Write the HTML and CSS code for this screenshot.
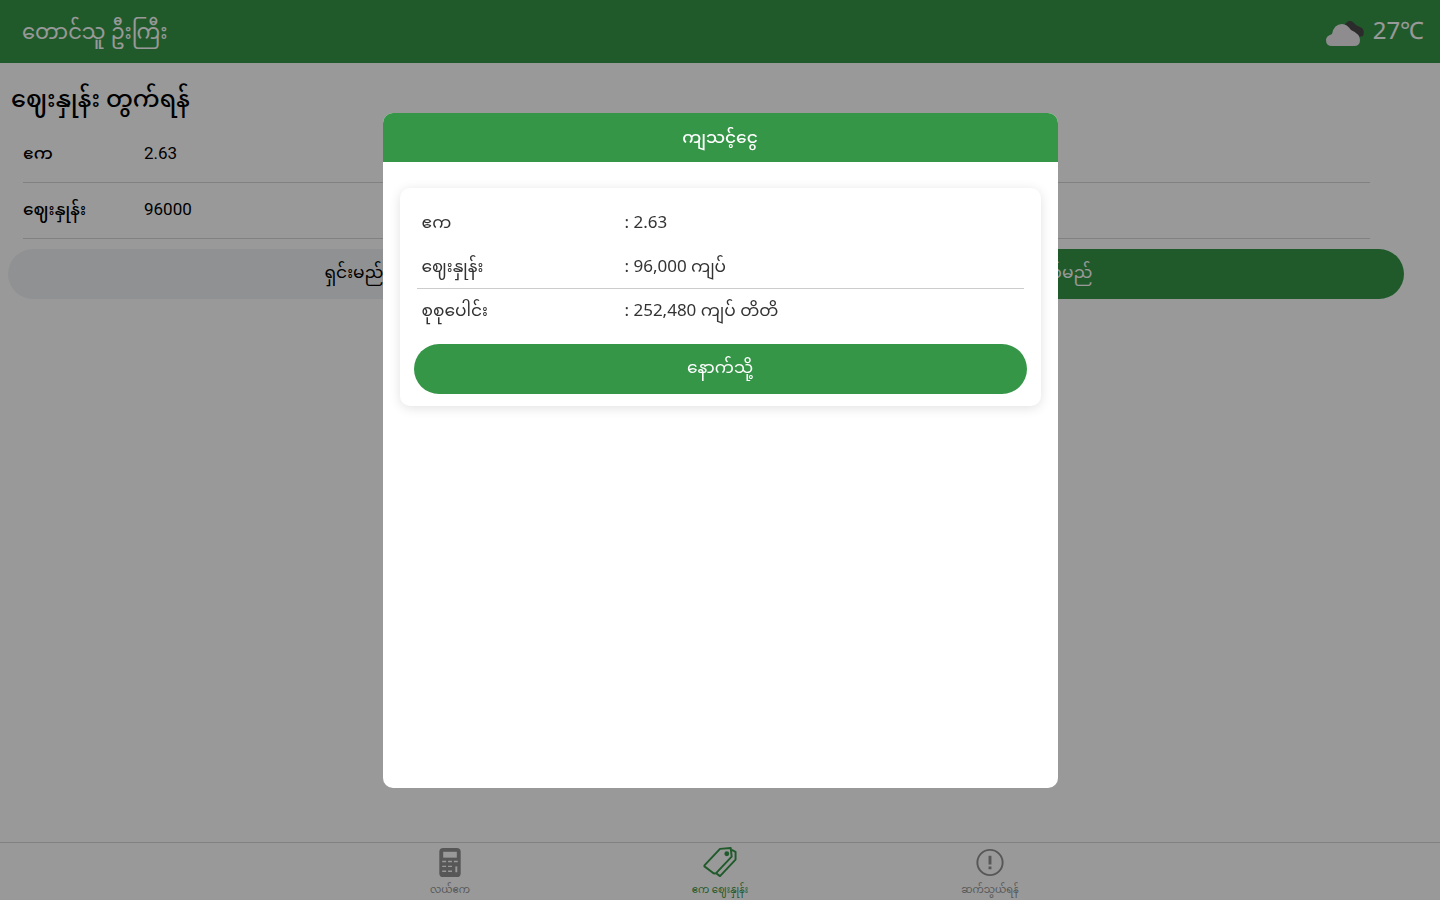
FILE: index.html
```html
<!DOCTYPE html>
<html lang="my">
<head>
    <meta charset="UTF-8">
    <meta name="viewport" content="width=device-width, initial-scale=1.0">
    <title>တောင်သူ ဦးကြီး</title>
    <link rel="stylesheet" href="styles.css">
</head>
<body>
<div class="page">
    <header class="header">
        <div class="app-name">တောင်သူ ဦးကြီး</div>
        <div class="weather">
            <svg class="cloud" viewBox="0 0 40 28" aria-hidden="true">
                <path d="M18 8 L22 3 Q25 1 28 3 L31 6 L37 9 Q40 12 38 17 L34 18 L28 16 Z" fill="#484848"/>
                <path d="M7 27 Q1 27 1 21 Q1 17 7 15 Q9 5 17 5 Q22 5 26 11 Q35 15 35 21 Q35 27 29 27 Z" fill="#eeeaf0"/>
            </svg>
            <span>27℃</span>
        </div>
    </header>

    <main class="content">
        <h1>ဈေးနှုန်း တွက်ရန်</h1>
        <form>
            <div class="field">
                <label for="acre">ဧက</label>
                <input type="text" id="acre" value="2.63">
            </div>
            <div class="field">
                <label for="price">ဈေးနှုန်း</label>
                <input type="text" id="price" value="96000">
            </div>
            <div class="actions">
                <button type="reset" class="btn btn-light">ရှင်းမည်</button>
                <button type="button" class="btn">တွက်မည်</button>
            </div>
        </form>
    </main>

    <nav class="tabs">
        <a href="#area" class="tab">
            <svg viewBox="0 0 36 36" aria-hidden="true">
                <rect x="7" y="3" width="22" height="30" rx="4" fill="currentColor"/>
                <path d="M11 7h14v6H11z" fill="#fff"/>
                <path d="M10 17h16M10 22h11M10 27h11" stroke="#fff" stroke-width="1.5" stroke-dasharray="4 2"/>
                <path d="M24.5 22v6" stroke="#fff" stroke-width="2"/>
            </svg>
            <span>လယ်ဧက</span>
        </a>
        <a href="#price" class="tab active">
            <svg viewBox="0 0 36 36" fill="none" stroke="currentColor" stroke-width="2" stroke-linejoin="round" aria-hidden="true">
                <path d="M2 21 L18 4 L29 3 L30 12 L14 29 Q12 30 10 28 L2 22 Z"/>
                <path d="M30 5 L34 7 L34 15 L18 32 L14 29"/>
                <circle cx="25" cy="9" r="1.5" fill="currentColor"/>
            </svg>
            <span>ဧက ဈေးနှုန်း</span>
        </a>
        <a href="#contact" class="tab">
            <svg viewBox="0 0 36 36" fill="none" stroke="currentColor" stroke-width="2" aria-hidden="true">
                <circle cx="18" cy="18" r="13"/>
                <path d="M18 11v9M18 22v3" stroke-width="3"/>
            </svg>
            <span>ဆက်သွယ်ရန်</span>
        </a>
    </nav>
</div>

<div class="backdrop">
    <section class="modal" role="dialog" aria-labelledby="modal-title">
        <h2 id="modal-title">ကျသင့်ငွေ</h2>
        <div class="card">
            <dl class="row">
                <dt>ဧက</dt>
                <dd>: 2.63</dd>
            </dl>
            <dl class="row">
                <dt>ဈေးနှုန်း</dt>
                <dd>: 96,000 ကျပ်</dd>
            </dl>
            <dl class="row total">
                <dt>စုစုပေါင်း</dt>
                <dd>: 252,480 ကျပ် တိတိ</dd>
            </dl>
            <button type="button" class="btn">နောက်သို့</button>
        </div>
    </section>
</div>
</body>
</html>
```
FILE: styles.css
```css
:root {
    --green: #369648;
    --border: #d8d8d8;
}

* {
    margin: 0;
    padding: 0;
    box-sizing: border-box;
}

body {
    font-family: Roboto, 'Noto Sans', 'Noto Sans Myanmar', sans-serif;
    font-size: 17px;
    color: #000;
    background: #fff;
}

.page {
    min-height: 100vh;
    display: flex;
    flex-direction: column;
}

.header {
    height: 63px;
    padding: 0 16px 0 22px;
    display: flex;
    align-items: center;
    justify-content: space-between;
    color: #fff;
    background: var(--green);
}

.app-name {
    padding-top: 4px;
    font-size: 21px;
}

.weather {
    padding-bottom: 4px;
    display: flex;
    align-items: center;
    gap: 8px;
    font-family: 'Noto Sans', sans-serif;
    font-size: 24px;
    line-height: 32px;
}

.cloud {
    width: 40px;
    height: 28px;
    margin-top: 6px;
}

.content {
    flex: 1;
    padding: 8px 36px 0 8px;
}

h1 {
    height: 56px;
    line-height: 56px;
    padding-left: 3px;
    font-size: 24px;
    font-weight: 500;
}

.field {
    height: 56px;
    margin: 0 34px 0 15px;
    display: flex;
    align-items: center;
    border-bottom: 1px solid var(--border);
}

.field label {
    width: 121px;
    font-weight: 500;
}

.field input {
    flex: 1;
    padding-bottom: 4px;
    border: 0;
    font: inherit;
    background: transparent;
}

.actions {
    display: flex;
    gap: 12px;
    margin-top: 10px;
}

.btn {
    width: 100%;
    height: 50px;
    border: 0;
    border-radius: 25px;
    font: inherit;
    color: #fff;
    background: var(--green);
}

.btn-light {
    color: #000;
    background: #f0f2f4;
}

.tabs {
    height: 58px;
    display: flex;
    justify-content: center;
    border-top: 1px solid var(--border);
}

.tab {
    width: 270px;
    padding-top: 2px;
    display: flex;
    flex-direction: column;
    align-items: center;
    color: #929292;
    font-size: 10px;
    line-height: 20px;
    text-decoration: none;
}

.tab svg {
    width: 36px;
    height: 36px;
}

.tab.active {
    color: var(--green);
}

.backdrop {
    position: fixed;
    inset: 0;
    display: flex;
    align-items: center;
    justify-content: center;
    background: rgba(0, 0, 0, 0.4);
}

.modal {
    width: 75vh;
    height: 75vh;
    border-radius: 10px;
    overflow: hidden;
    background: #fff;
}

.modal h2 {
    height: 49px;
    line-height: 49px;
    text-align: center;
    font-size: 17px;
    font-weight: 500;
    color: #fff;
    background: var(--green);
}

.card {
    margin: 26px 17px;
    padding: 12px 14px;
    border-radius: 10px;
    color: #333;
    box-shadow: 0 2px 12px rgba(0, 0, 0, 0.12);
}

.row {
    height: 44px;
    margin: 0 3px;
    padding: 0 5px;
    display: flex;
    align-items: center;
    line-height: 24px;
}

.row dt {
    width: 34%;
}

.row dd {
    font-family: 'Noto Sans', 'Noto Sans Myanmar', sans-serif;
}

.row.total {
    border-top: 1px solid #ccc;
}

.card .btn {
    margin-top: 12px;
}
```
